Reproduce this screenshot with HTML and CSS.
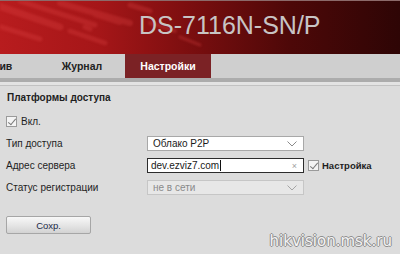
FILE: index.html
```html
<!DOCTYPE html>
<html lang="ru">
<head>
    <meta charset="UTF-8">
    <meta name="viewport" content="width=device-width, initial-scale=1.0">
    <title>DS-7116N-SN/P</title>
    <link rel="stylesheet" href="styles.css">
</head>
<body>

    <!-- Header -->
    <div class="header">
        <svg class="streaks" width="260" height="54" viewBox="0 0 260 54">
            <g stroke="#e04848" stroke-linecap="round" fill="none" opacity="0.28">
                <line x1="-10" y1="2" x2="60" y2="26" stroke-width="7"/>
                <line x1="20" y1="0" x2="95" y2="24" stroke-width="5"/>
                <line x1="60" y1="2" x2="130" y2="22" stroke-width="6"/>
                <line x1="-5" y1="24" x2="40" y2="38" stroke-width="5"/>
                <line x1="70" y1="30" x2="105" y2="42" stroke-width="5"/>
                <line x1="95" y1="14" x2="120" y2="22" stroke-width="4"/>
                <line x1="130" y1="4" x2="150" y2="10" stroke-width="5"/>
                <line x1="150" y1="22" x2="175" y2="30" stroke-width="4"/>
                <line x1="180" y1="36" x2="200" y2="44" stroke-width="3"/>
                <line x1="85" y1="26" x2="90" y2="28" stroke-width="5"/>
            </g>
        </svg>
        <div class="model">DS-7116N-SN/P</div>
    </div>

    <!-- Tabs -->
    <div class="tabs">
        <div class="tab">Архив</div>
        <div class="tab">Журнал</div>
        <div class="tab active">Настройки</div>
    </div>
    <div class="tabs-rule"></div>

    <!-- Settings -->
    <div class="panel">
        <div class="panel-title">Платформы доступа</div>

        <label class="check-row">
            <span class="checkbox checked"></span>
            <span>Вкл.</span>
        </label>

        <div class="form">
            <div class="form-label">Тип доступа</div>
            <div class="field select">
                <span>Облако P2P</span>
                <svg class="arrow" width="10" height="6" viewBox="0 0 10 6"><polyline points="0.5,0.5 5,5 9.5,0.5" fill="none" stroke="#8a8a8a" stroke-width="1"/></svg>
            </div>
            <div class="form-extra"></div>

            <div class="form-label">Адрес сервера</div>
            <div class="field text focus">
                <span>dev.ezviz7.com</span><span class="caret"></span>
                <span class="clear">×</span>
            </div>
            <label class="check-row inline">
                <span class="checkbox checked"></span>
                <span>Настройка</span>
            </label>

            <div class="form-label">Статус регистрации</div>
            <div class="field select disabled">
                <span>не в сети</span>
                <svg class="arrow" width="10" height="6" viewBox="0 0 10 6"><polyline points="0.5,0.5 5,5 9.5,0.5" fill="none" stroke="#a4a4a4" stroke-width="1"/></svg>
            </div>
            <div class="form-extra"></div>
        </div>

        <button class="save">Сохр.</button>
    </div>

    <div class="watermark">hikvision.msk.ru</div>

</body>
</html>
```

FILE: styles.css
```css
* {
    margin: 0;
    padding: 0;
    box-sizing: border-box;
}

body {
    font-family: "Liberation Sans", Arial, sans-serif;
    font-size: 9.5px;
    color: #1e1e1e;
    background-color: #dcdcdc;
    width: 400px;
    height: 254px;
    overflow: hidden;
    position: relative;
}

/* Header */
.header {
    position: relative;
    height: 54px;
    border-top: 1px solid #8c6a6a;
    background: linear-gradient(to right, #b81c1e 0%, #a51618 25%, #7a0e0f 48%, #4e0808 72%, #2e0505 100%);
    overflow: hidden;
}

.streaks {
    position: absolute;
    left: 0;
    top: 0;
    filter: blur(1px);
}

.model {
    position: relative;
    padding: 12px 0 0 139px;
    font-size: 25px;
    line-height: 25px;
    color: #c8c4c4;
}

/* Tabs */
.tabs {
    display: flex;
    height: 24px;
    margin-left: -47px;
    background-color: #cfcfcf;
}

.tab {
    width: 86px;
    text-align: center;
    font-size: 10.5px;
    font-weight: bold;
    line-height: 24px;
    color: #222;
}

.tab.active {
    background-color: #7b2225;
    color: #fff;
}

.tabs-rule {
    height: 8px;
    border-top: 4px solid #acacac;
    border-bottom: 1px solid #c2c2c2;
    background-color: #e3e3e3;
}

/* Panel */
.panel {
    padding: 5px 0 0 6px;
}

.panel-title {
    font-size: 10px;
    font-weight: bold;
    line-height: 14px;
    margin-left: 1px;
}

.check-row {
    display: flex;
    align-items: center;
    gap: 4px;
    height: 14px;
    margin-top: 9px;
    font-size: 10px;
}

.check-row.inline {
    margin-top: 0;
    margin-left: 4px;
    height: auto;
    gap: 3px;
    font-weight: bold;
    font-size: 9.5px;
}

.checkbox {
    width: 11px;
    height: 11px;
    border: 1px solid #9a9a9a;
    background-color: #f4f4f4;
    position: relative;
}

.checkbox.checked::after {
    content: "";
    position: absolute;
    left: 3px;
    top: 0;
    width: 3px;
    height: 7px;
    border-right: 1px solid #7a7a7a;
    border-bottom: 1px solid #7a7a7a;
    transform: rotate(40deg);
}

.form {
    display: grid;
    grid-template-columns: 141px 157px auto;
    row-gap: 7px;
    align-items: center;
    margin-top: 8px;
}

.form-label {
    font-size: 10px;
}

.field {
    height: 15px;
    display: flex;
    align-items: center;
    padding: 0 6px 0 5px;
    background-color: #fff;
    border: 1px solid #a8a8a8;
    font-size: 10px;
    color: #1a1a1a;
}

.field .arrow {
    margin-left: auto;
}

.field.focus {
    border-color: #2c2c2c;
    padding-left: 3px;
}

.caret {
    width: 1px;
    height: 11px;
    background-color: #111;
    margin-left: 1px;
}

.clear {
    margin-left: auto;
    color: #a0a0a0;
    font-size: 9px;
}

.field.disabled {
    background-color: #e7e7e7;
    border-color: #c6c6c6;
    color: #8a8a8a;
}

/* Button */
.save {
    display: block;
    width: 85px;
    height: 18px;
    margin-top: 21px;
    border: 1px solid #a6a6a6;
    border-radius: 2px;
    background: linear-gradient(to bottom, #f8f8f8 0%, #e6e6e6 50%, #d2d2d2 100%);
    font-family: "Liberation Sans", Arial, sans-serif;
    font-size: 9.5px;
    color: #1c2a48;
}

/* Watermark */
.watermark {
    position: absolute;
    right: 8px;
    bottom: 4px;
    font-family: "DejaVu Sans", sans-serif;
    font-size: 15px;
    color: #f4f4f4;
    text-shadow: 1px 0 #8e8e8e, -1px 0 #8e8e8e, 0 1px #8e8e8e, 0 -1px #8e8e8e;
}
```
